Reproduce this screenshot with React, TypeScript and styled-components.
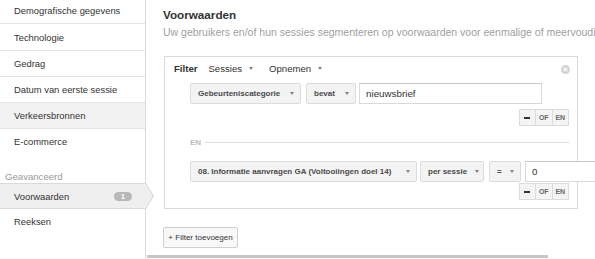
import React from "react";
import styled, { createGlobalStyle } from "styled-components";

const Global = createGlobalStyle`
  html, body {
    margin: 0;
    padding: 0;
    width: 595px;
    height: 259px;
    overflow: hidden;
    background: #fff;
    font-family: "Liberation Sans", Arial, sans-serif;
  }
  * { box-sizing: border-box; }
`;

const Page = styled.div`
  display: flex;
  width: 595px;
  height: 259px;
  overflow: hidden;
`;

const Sidebar = styled.nav`
  flex: 0 0 146px;
  width: 146px;
  height: 259px;
  border-right: 1px solid #dcdcdc;
  display: flex;
  flex-direction: column;
`;

const List = styled.div`
  margin-top: -2px;
  display: flex;
  flex-direction: column;
`;

const Item = styled.div<{ $shaded?: boolean; $noBorder?: boolean; $h?: number }>`
  height: ${(p) => p.$h ?? 26}px;
  padding-left: 14px;
  display: flex;
  align-items: center;
  font-size: 9.4px;
  color: #333;
  background: ${(p) => (p.$shaded ? "#f2f2f2" : "#fff")};
  border-bottom: 1px solid ${(p) => (p.$noBorder ? "transparent" : "#e5e5e5")};
`;

const GroupLabel = styled.div`
  height: 28px;
  padding: 16px 0 0 5px;
  font-size: 9.6px;
  line-height: 11px;
  color: #9a9a9a;
`;

const ActiveItem = styled.div`
  position: relative;
  height: 26px;
  margin-right: -1px;
  padding: 0 14px;
  display: flex;
  align-items: center;
  justify-content: space-between;
  font-size: 9.4px;
  color: #333;
  background: #efefef;
  border-top: 1px solid #dadada;
  border-bottom: 1px solid #dadada;

  &::before {
    content: "";
    position: absolute;
    top: -1px;
    left: 100%;
    border-top: 13px solid transparent;
    border-bottom: 13px solid transparent;
    border-left: 8px solid #d2d2d2;
  }
  &::after {
    content: "";
    position: absolute;
    top: 0;
    left: 100%;
    border-top: 12px solid transparent;
    border-bottom: 12px solid transparent;
    border-left: 7px solid #efefef;
  }
`;

const Badge = styled.span`
  width: 18px;
  height: 9px;
  border-radius: 5px;
  background: #b8b8b8;
  color: #fff;
  font-size: 7px;
  font-weight: bold;
  line-height: 9px;
  text-align: center;
`;

const Main = styled.main`
  flex: 1;
  display: flex;
  flex-direction: column;
  min-width: 0;
`;

const Content = styled.div`
  padding-left: 17px;
  display: flex;
  flex-direction: column;
  align-items: flex-start;
`;

const Title = styled.h1`
  margin: 8px 0 0;
  font-size: 11.7px;
  line-height: 14px;
  font-weight: bold;
  color: #333;
`;

const Subtitle = styled.p`
  margin: 4px 0 0;
  font-size: 10.5px;
  line-height: 12px;
  color: #a0a0a0;
  white-space: nowrap;
`;

const FilterBox = styled.section`
  position: relative;
  margin: 18px 0 0 1px;
  width: 414px;
  border: 1px solid #dadada;
  padding: 4px 8px 8px 9px;
`;

const Header = styled.div`
  display: flex;
  align-items: center;
  height: 14px;
  font-size: 9.6px;
  color: #333;
`;

const HeaderStrong = styled.span`
  font-weight: bold;
  margin-right: 11px;
`;

const HeaderMenu = styled.span`
  display: inline-flex;
  align-items: center;
  margin-right: 16px;
`;

const Caret = styled.span<{ $gap?: number }>`
  display: inline-block;
  width: 0;
  height: 0;
  margin-left: ${(p) => p.$gap ?? 8}px;
  border-left: 2.5px solid transparent;
  border-right: 2.5px solid transparent;
  border-top: 3px solid #808080;
`;

const CloseIcon = styled.svg`
  position: absolute;
  top: 8px;
  right: 7px;
`;

const Condition = styled.div<{ $top: number }>`
  margin: ${(p) => p.$top}px 0 0 16px;
  display: flex;
  flex-direction: column;
`;

const Controls = styled.div`
  display: flex;
  align-items: center;
  height: 21px;
`;

const Select = styled.div<{ $w: number; $gap?: number }>`
  flex: 0 0 ${(p) => p.$w}px;
  width: ${(p) => p.$w}px;
  height: 21px;
  margin-right: ${(p) => p.$gap ?? 4}px;
  padding: 0 6px 0 7px;
  display: flex;
  align-items: center;
  justify-content: space-between;
  background: #f3f3f3;
  border: 1px solid #dcdcdc;
  border-radius: 2px;
  font-size: 8px;
  font-weight: bold;
  color: #4a4a4a;
  white-space: nowrap;
`;

const Input = styled.div<{ $w: number }>`
  flex: 0 0 ${(p) => p.$w}px;
  width: ${(p) => p.$w}px;
  height: 21px;
  padding-left: 6px;
  display: flex;
  align-items: center;
  background: #fff;
  border: 1px solid #d9d9d9;
  border-top-color: #c8c8c8;
  font-size: 9.8px;
  color: #333;
`;

const Actions = styled.div<{ $top: number }>`
  margin-top: ${(p) => p.$top}px;
  display: flex;
  justify-content: flex-end;
`;

const ActionButton = styled.div`
  width: 17.5px;
  height: 17px;
  display: flex;
  align-items: center;
  justify-content: center;
  background: #f4f4f4;
  border: 1px solid #dcdcdc;
  margin-left: -1px;
  font-size: 7px;
  font-weight: bold;
  color: #666;
`;

const Minus = styled.span`
  width: 6px;
  height: 2px;
  background: #333;
`;

const Divider = styled.div`
  margin: 10px 0 0 16px;
  height: 12px;
  display: flex;
  align-items: center;
  font-size: 8px;
  font-weight: bold;
  color: #bcbcbc;

  &::after {
    content: "";
    flex: 1;
    height: 1px;
    margin-left: 4px;
    background: #dedede;
  }
`;

const AddButton = styled.button`
  margin-top: 18px;
  width: 75px;
  height: 21px;
  padding: 0;
  font-family: inherit;
  font-size: 8px;
  color: #333;
  background: #f8f8f8;
  border: 1px solid #cfcfcf;
  border-radius: 2px;
`;

const Scrollbar = styled.div`
  margin: 7px 0 0 1px;
  width: 401px;
  height: 3px;
  background: #c6c6c6;
`;

const ButtonGroup = () => (
  <>
    <ActionButton>
      <Minus />
    </ActionButton>
    <ActionButton>OF</ActionButton>
    <ActionButton>EN</ActionButton>
  </>
);

export default function App() {
  return (
    <>
      <Global />
      <Page>
        <Sidebar>
          <List>
            <Item>Demografische gegevens</Item>
            <Item $h={27}>Technologie</Item>
            <Item>Gedrag</Item>
            <Item>Datum van eerste sessie</Item>
            <Item $shaded>Verkeersbronnen</Item>
            <Item $noBorder>E-commerce</Item>
            <GroupLabel>Geavanceerd</GroupLabel>
            <ActiveItem>
              <span>Voorwaarden</span>
              <Badge>1</Badge>
            </ActiveItem>
            <Item $noBorder>Reeksen</Item>
          </List>
        </Sidebar>
        <Main>
          <Content>
            <Title>Voorwaarden</Title>
            <Subtitle>
              Uw gebruikers en/of hun sessies segmenteren op voorwaarden voor eenmalige of meervoudige sessies.
            </Subtitle>
            <FilterBox>
              <Header>
                <HeaderStrong>Filter</HeaderStrong>
                <HeaderMenu>
                  Sessies
                  <Caret $gap={7} />
                </HeaderMenu>
                <HeaderMenu>
                  Opnemen
                  <Caret $gap={7} />
                </HeaderMenu>
              </Header>
              <CloseIcon width="9" height="9" viewBox="0 0 9 9">
                <circle cx="4.5" cy="4.5" r="4.5" fill="#d4d4d4" />
                <path d="M2.8 2.8 L6.2 6.2 M6.2 2.8 L2.8 6.2" stroke="#fff" strokeWidth="1.2" />
              </CloseIcon>

              <Condition $top={8}>
                <Controls>
                  <Select $w={111} $gap={5}>
                    Gebeurteniscategorie
                    <Caret />
                  </Select>
                  <Select $w={50} $gap={3}>
                    bevat
                    <Caret />
                  </Select>
                  <Input $w={183}>nieuwsbrief</Input>
                </Controls>
                <Actions $top={5}>
                  <ButtonGroup />
                </Actions>
              </Condition>

              <Divider>EN</Divider>

              <Condition $top={13}>
                <Controls>
                  <Select $w={227} $gap={3}>
                    08. Informatie aanvragen GA (Voltooiingen doel 14)
                    <Caret />
                  </Select>
                  <Select $w={64} $gap={5}>
                    per sessie
                    <Caret />
                  </Select>
                  <Select $w={32} $gap={4}>
                    =
                    <Caret />
                  </Select>
                  <Input $w={183}>0</Input>
                </Controls>
                <Actions $top={1}>
                  <ButtonGroup />
                </Actions>
              </Condition>
            </FilterBox>
            <AddButton>+ Filter toevoegen</AddButton>
          </Content>
          <Scrollbar />
        </Main>
      </Page>
    </>
  );
}
